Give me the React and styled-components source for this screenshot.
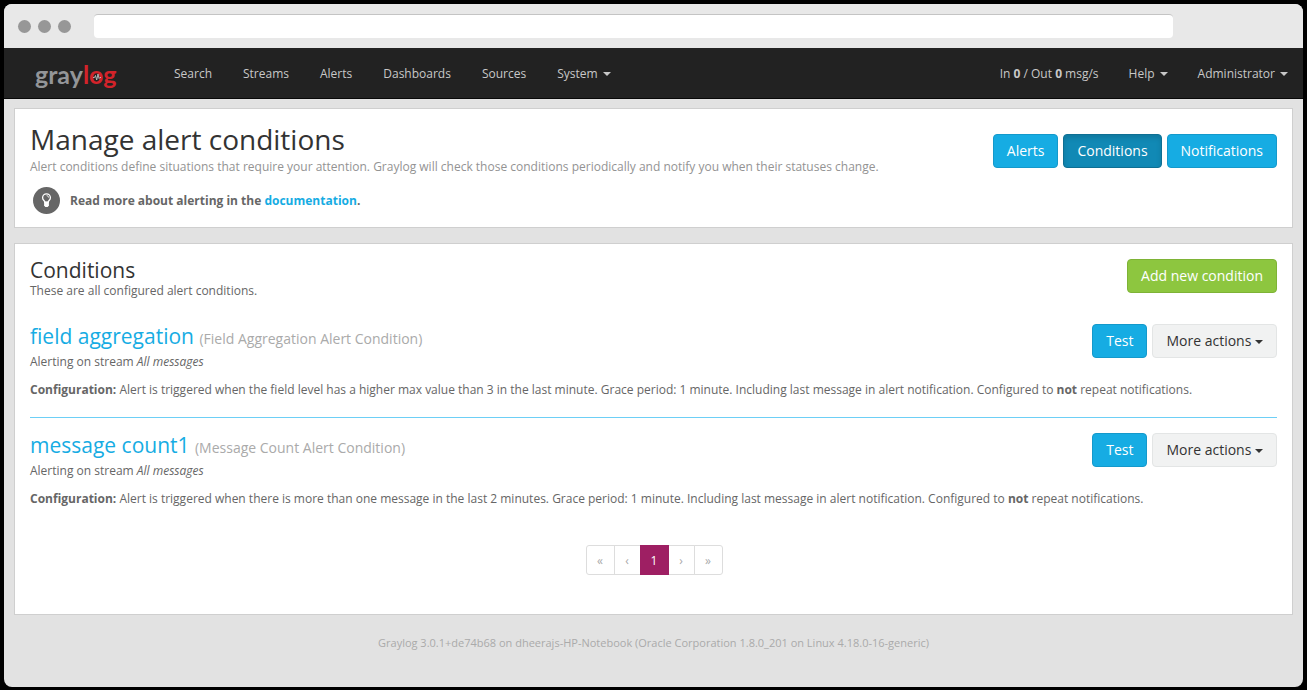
import React from "react";
import styled, { createGlobalStyle } from "styled-components";

const GlobalStyle = createGlobalStyle`
  * { box-sizing: border-box; }
  body {
    margin: 0;
    background: #000;
    color: #666;
    font: 12px/17px "Open Sans", sans-serif;
  }
  h1, h2, h3, p, ul { margin: 0; padding: 0; font-weight: 400; }
  ul { list-style: none; }
  a { color: #16ace3; text-decoration: none; }
`;

const Page = styled.div`
  display: flex;
  min-height: 100vh;
  padding: 4px 4px 3px;
`;

const Window = styled.div`
  flex: 1;
  display: flex;
  flex-direction: column;
  min-width: 0;
  border-radius: 8px;
  overflow: hidden;
  background: #e2e2e2;
`;

const TitleBar = styled.div`
  display: flex;
  align-items: center;
  gap: 23px;
  height: 44px;
  padding: 0 130px 0 14px;
  background: #e8e8e8;
`;

const Dots = styled.div`
  display: flex;
  gap: 7px;
`;

const Dot = styled.span`
  width: 13px;
  height: 13px;
  border-radius: 50%;
  background: #979797;
`;

const Address = styled.input`
  flex: 1;
  min-width: 0;
  height: 24px;
  padding: 0 8px;
  border: 0;
  border-top: 1px solid #c4c4c4;
  border-radius: 4px;
  background: #fff;
`;

const NavBar = styled.nav`
  display: flex;
  align-items: center;
  height: 51px;
  padding-left: 31px;
  background: #222;
  border-bottom: 1px solid #080808;
`;

const Brand = styled.a`
  width: 83px;
  margin-right: 41px;
  padding-top: 2px;
  font: 700 25px/32px Lato, sans-serif;
  color: #939598;
`;

const BrandAccent = styled.span`
  position: relative;
  color: #d2232a;
`;

const Pulse = styled.svg`
  position: absolute;
  left: 9px;
  top: 14px;
  width: 10px;
  height: 8px;
`;

const NavList = styled.ul`
  display: flex;
  gap: ${(p) => (p.$right ? 0 : "1px")};
  margin-left: ${(p) => (p.$right ? "auto" : 0)};
`;

const NavLink = styled.a`
  display: flex;
  align-items: center;
  gap: 5px;
  padding: 2px 15px 0;
  line-height: 48px;
  color: #c8c8c8;
  white-space: pre;
`;

const Caret = styled.span`
  display: inline-block;
  border: 4px solid transparent;
  border-top-color: currentColor;
  border-bottom: 0;
  vertical-align: middle;
`;

const Main = styled.main`
  display: flex;
  flex-direction: column;
  gap: 15px;
  padding: 9px 10px 0;
`;

const Panel = styled.section`
  padding: 15px 15px 13px;
  border: 1px solid #cfcfcf;
  background: #fff;
`;

const Split = styled.div`
  display: flex;
  justify-content: space-between;
  align-items: flex-start;
  gap: 20px;
`;

const PageTitle = styled.h1`
  padding-bottom: 4px;
  font-size: 28px;
  line-height: 30px;
  color: #333;
`;

const Muted = styled.p`
  color: #939393;
`;

const Tip = styled.div`
  display: flex;
  align-items: center;
  gap: 10px;
  padding: 12px 0 0 3px;
  font-weight: 700;
`;

const TipIcon = styled.svg`
  width: 27px;
  height: 27px;
`;

const Buttons = styled.div`
  display: flex;
  flex: none;
  gap: 5px;
  padding-top: ${(p) => (p.$low ? "10px" : 0)};
`;

const tones = {
  info: ["#16ace3", "#1499cb", "#fff"],
  active: ["#1189b5", "#0e6f93", "#fff"],
  success: ["#8dc63f", "#7eb336", "#fff"],
  plain: ["#f1f2f2", "#e3e5e5", "#333"],
};

const Button = styled.button`
  height: 34px;
  padding: 0 13px;
  border: 1px solid ${(p) => tones[p.$tone][1]};
  border-radius: 4px;
  background: ${(p) => tones[p.$tone][0]};
  color: ${(p) => tones[p.$tone][2]};
  font: 14px/20px "Open Sans", sans-serif;
  box-shadow: ${(p) => (p.$tone === "active" ? "inset 0 3px 5px rgba(0,0,0,.125)" : "none")};
`;

const SectionTitle = styled.h2`
  font-size: 21px;
  line-height: 23px;
  color: #333;
`;

const List = styled.ul`
  padding-top: 10px;
`;

const Item = styled.li`
  padding: 15px 0 19px;
  & + & { border-top: 1px solid #6dcff6; }
`;

const ItemTitle = styled.h3`
  padding-bottom: 2px;
  font-size: 21px;
  line-height: 24px;
`;

const Kind = styled.small`
  font-size: 14px;
  color: #aaa;
`;

const Config = styled.p`
  padding-top: 11px;
`;

const Pager = styled.ul`
  display: flex;
  justify-content: center;
  padding: 19px 0 26px;
`;

const PageButton = styled.button`
  position: relative;
  z-index: ${(p) => (p.$current ? 1 : 0)};
  height: 30px;
  min-width: 27px;
  margin-right: -1px;
  padding: 0 10px;
  border: 1px solid ${(p) => (p.$current ? "#9e1f63" : "#ddd")};
  border-radius: ${(p) => p.$round || 0};
  background: ${(p) => (p.$current ? "#9e1f63" : "#fff")};
  color: ${(p) => (p.$current ? "#fff" : "#aaa")};
  font: 12px/17px "Open Sans", sans-serif;
  ${(p) => (p.$round || p.$current ? "min-width: 29px;" : "")}
`;

const Footer = styled.footer`
  padding: 19px 10px;
  font-size: 11px;
  text-align: center;
  color: #aaa;
`;

const conditions = [
  {
    name: "field aggregation",
    kind: "(Field Aggregation Alert Condition)",
    text: "Alert is triggered when the field level has a higher max value than 3 in the last minute. Grace period: 1 minute. Including last message in alert notification. Configured to ",
  },
  {
    name: "message count1",
    kind: "(Message Count Alert Condition)",
    text: "Alert is triggered when there is more than one message in the last 2 minutes. Grace period: 1 minute. Including last message in alert notification. Configured to ",
  },
];

function Condition({ name, kind, text }) {
  return (
    <Item>
      <Split>
        <div>
          <ItemTitle>
            <a href="#condition">{name}</a> <Kind>{kind}</Kind>
          </ItemTitle>
          <p>Alerting on stream <em>All messages</em></p>
        </div>
        <Buttons>
          <Button $tone="info">Test</Button>
          <Button $tone="plain">More actions <Caret /></Button>
        </Buttons>
      </Split>
      <Config>
        <b>Configuration:</b> {text}<b>not</b> repeat notifications.
      </Config>
    </Item>
  );
}

export default function App() {
  return (
    <Page>
      <GlobalStyle />
      <Window>
        <TitleBar>
          <Dots><Dot /><Dot /><Dot /></Dots>
          <Address type="text" aria-label="Address" />
        </TitleBar>
        <NavBar>
          <Brand href="#home">
            gray
            <BrandAccent>
              log
              <Pulse viewBox="0 0 10 8" fill="none" stroke="#c4c4c4" strokeWidth="0.9">
                <path d="M1 4.5h1.5l1-2 1.2 4.5L6 1l1 4.5.8-1H9" />
              </Pulse>
            </BrandAccent>
          </Brand>
          <NavList>
            {["Search", "Streams", "Alerts", "Dashboards", "Sources"].map((label) => (
              <li key={label}><NavLink href="#nav">{label}</NavLink></li>
            ))}
            <li><NavLink href="#nav">System<Caret /></NavLink></li>
          </NavList>
          <NavList $right>
            <li><NavLink as="span"><span>In <b>0</b> / Out <b>0</b> msg/s</span></NavLink></li>
            <li><NavLink href="#help">Help<Caret /></NavLink></li>
            <li><NavLink href="#admin">Administrator<Caret /></NavLink></li>
          </NavList>
        </NavBar>
        <Main>
          <Panel>
            <Split>
              <div>
                <PageTitle>Manage alert conditions</PageTitle>
                <Muted>
                  Alert conditions define situations that require your attention. Graylog will check those
                  conditions periodically and notify you when their statuses change.
                </Muted>
                <Tip>
                  <TipIcon viewBox="0 0 27 27">
                    <circle cx="13.5" cy="13.5" r="13.5" fill="#666" />
                    <path d="M11.9 15.4c0-1.7-2.3-2.2-2.3-4.7a3.9 3.9 0 0 1 7.8 0c0 2.5-2.3 3-2.3 4.7z" fill="none" stroke="#fff" strokeWidth="1.3" />
                    <path d="M13.6 8.6a2 2 0 0 1 2 2" fill="none" stroke="#fff" strokeWidth="0.8" />
                    <path d="M11.1 14.6h4.8v3.9l-1.2 1.5h-2.4l-1.2-1.5z" fill="#fff" />
                  </TipIcon>
                  <span>Read more about alerting in the <a href="#docs">documentation</a>.</span>
                </Tip>
              </div>
              <Buttons $low>
                <Button $tone="info">Alerts</Button>
                <Button $tone="active">Conditions</Button>
                <Button $tone="info">Notifications</Button>
              </Buttons>
            </Split>
          </Panel>
          <Panel>
            <Split>
              <div>
                <SectionTitle>Conditions</SectionTitle>
                <p>These are all configured alert conditions.</p>
              </div>
              <Buttons>
                <Button $tone="success">Add new condition</Button>
              </Buttons>
            </Split>
            <List>
              {conditions.map((c) => <Condition key={c.name} {...c} />)}
            </List>
            <Pager>
              <li><PageButton $round="3px 0 0 3px" aria-label="First">«</PageButton></li>
              <li><PageButton aria-label="Previous">‹</PageButton></li>
              <li><PageButton $current>1</PageButton></li>
              <li><PageButton aria-label="Next">›</PageButton></li>
              <li><PageButton $round="0 3px 3px 0" aria-label="Last">»</PageButton></li>
            </Pager>
          </Panel>
        </Main>
        <Footer>
          Graylog 3.0.1+de74b68 on dheerajs-HP-Notebook (Oracle Corporation 1.8.0_201 on Linux 4.18.0-16-generic)
        </Footer>
      </Window>
    </Page>
  );
}
